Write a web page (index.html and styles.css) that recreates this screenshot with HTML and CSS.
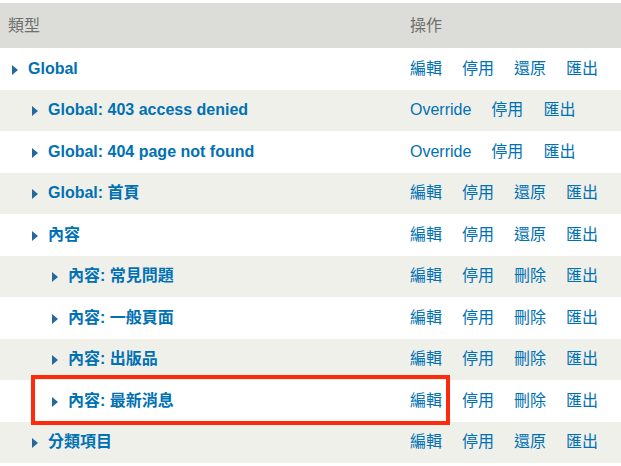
FILE: index.html
```html
<!DOCTYPE html>
<html lang="zh-Hant">
<head>
	<meta charset="UTF-8">
	<title>類型</title>
	<link rel="stylesheet" href="styles.css">
</head>
<body>
	<div class="page">
		<table class="types">
			<colgroup>
				<col class="col_name">
				<col class="col_ops">
			</colgroup>
			<thead>
				<tr><th>類型</th><th class="ops">操作</th></tr>
			</thead>
			<tbody>
				<tr>
					<td class="name"><span class="arrow"></span><a href="#">Global</a></td>
					<td class="ops"><ul class="links"><li><a href="#">編輯</a></li><li><a href="#">停用</a></li><li><a href="#">還原</a></li><li><a href="#">匯出</a></li></ul></td>
				</tr>
				<tr class="even">
					<td class="name"><span class="indent"></span><span class="arrow"></span><a href="#">Global: 403 access denied</a></td>
					<td class="ops"><ul class="links override"><li><a href="#">Override</a></li><li><a href="#">停用</a></li><li><a href="#">匯出</a></li></ul></td>
				</tr>
				<tr>
					<td class="name"><span class="indent"></span><span class="arrow"></span><a href="#">Global: 404 page not found</a></td>
					<td class="ops"><ul class="links override"><li><a href="#">Override</a></li><li><a href="#">停用</a></li><li><a href="#">匯出</a></li></ul></td>
				</tr>
				<tr class="even">
					<td class="name"><span class="indent"></span><span class="arrow"></span><a href="#">Global: 首頁</a></td>
					<td class="ops"><ul class="links"><li><a href="#">編輯</a></li><li><a href="#">停用</a></li><li><a href="#">還原</a></li><li><a href="#">匯出</a></li></ul></td>
				</tr>
				<tr>
					<td class="name"><span class="indent"></span><span class="arrow"></span><a href="#">內容</a></td>
					<td class="ops"><ul class="links"><li><a href="#">編輯</a></li><li><a href="#">停用</a></li><li><a href="#">還原</a></li><li><a href="#">匯出</a></li></ul></td>
				</tr>
				<tr class="even">
					<td class="name"><span class="indent"></span><span class="indent"></span><span class="arrow"></span><a href="#">內容: 常見問題</a></td>
					<td class="ops"><ul class="links"><li><a href="#">編輯</a></li><li><a href="#">停用</a></li><li><a href="#">刪除</a></li><li><a href="#">匯出</a></li></ul></td>
				</tr>
				<tr>
					<td class="name"><span class="indent"></span><span class="indent"></span><span class="arrow"></span><a href="#">內容: 一般頁面</a></td>
					<td class="ops"><ul class="links"><li><a href="#">編輯</a></li><li><a href="#">停用</a></li><li><a href="#">刪除</a></li><li><a href="#">匯出</a></li></ul></td>
				</tr>
				<tr class="even">
					<td class="name"><span class="indent"></span><span class="indent"></span><span class="arrow"></span><a href="#">內容: 出版品</a></td>
					<td class="ops"><ul class="links"><li><a href="#">編輯</a></li><li><a href="#">停用</a></li><li><a href="#">刪除</a></li><li><a href="#">匯出</a></li></ul></td>
				</tr>
				<tr>
					<td class="name"><span class="indent"></span><span class="indent"></span><span class="arrow"></span><a href="#">內容: 最新消息</a></td>
					<td class="ops"><ul class="links"><li><a href="#">編輯</a></li><li><a href="#">停用</a></li><li><a href="#">刪除</a></li><li><a href="#">匯出</a></li></ul></td>
				</tr>
				<tr class="even">
					<td class="name"><span class="indent"></span><span class="arrow"></span><a href="#">分類項目</a></td>
					<td class="ops"><ul class="links"><li><a href="#">編輯</a></li><li><a href="#">停用</a></li><li><a href="#">還原</a></li><li><a href="#">匯出</a></li></ul></td>
				</tr>
			</tbody>
		</table>
		<!-- 標示框 -->
		<div class="highlight"></div>
	</div>
</body>
</html>
```

FILE: styles.css
```css
body,ul,li,table{padding: 0;margin: 0;}
li{list-style: none;}
a{text-decoration: none;color: #0071b3;}

body{background: #fff;font: 16px/1 "Liberation Sans","Noto Sans CJK TC",sans-serif;}
.page{position: relative;padding-top: 3px;}

.types{width: 100%;border-collapse: collapse;table-layout: fixed;}
.col_name{width: 402px;}
.types th{height: 45px;padding: 0 8px;background: #dcddd8;color: #6f6f6b;font-weight: normal;text-align: left;vertical-align: middle;}
.types td{height: 41.5px;padding: 0 8px;vertical-align: middle;background: #fff;}
.types tr.even td{background: #f0f0eb;}

.types td.name{padding-left: 12px;white-space: nowrap;}
.name a{font-weight: bold;}
.indent{display: inline-block;width: 20px;}
.arrow{display: inline-block;width: 0;height: 0;border-left: 6px solid #24689c;border-top: 5px solid transparent;border-bottom: 5px solid transparent;margin-right: 10px;vertical-align: -1px;}

.links{display: flex;gap: 20px;}
.links.override{gap: 20px;}

.highlight{position: absolute;left: 31px;top: 375px;width: 419px;height: 50px;box-sizing: border-box;border: 4px solid #ff2a0c;}
```
